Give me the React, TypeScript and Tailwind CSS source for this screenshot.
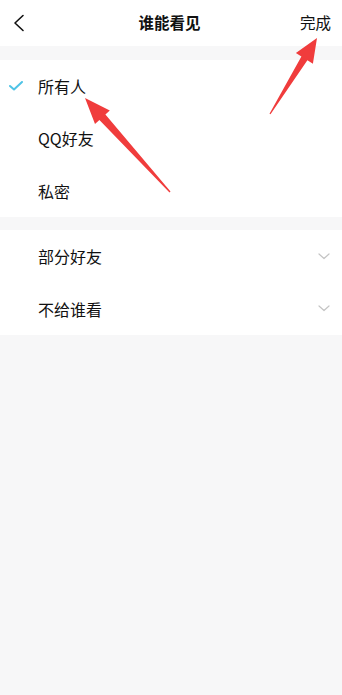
import { useState } from "react";

const font = "font-['Noto_Sans_CJK_SC','Noto_Sans',sans-serif]";

function Check() {
  return (
    <svg width="14" height="10" viewBox="0 0 14 10" fill="none">
      <path d="M1 5 L5 8.5 L13 1" stroke="#4fc3e6" strokeWidth="2" strokeLinecap="round" strokeLinejoin="round" />
    </svg>
  );
}

function ChevronDown() {
  return (
    <svg width="12" height="7" viewBox="0 0 12 7" fill="none">
      <path d="M1 1 L6 5.5 L11 1" stroke="#c4c4c4" strokeWidth="1.2" strokeLinecap="round" strokeLinejoin="round" />
    </svg>
  );
}

export default function App() {
  const [who, setWho] = useState("所有人");
  const options = ["所有人", "QQ好友", "私密"];

  return (
    <div className={`relative w-[342px] h-[695px] bg-[#f7f7f8] text-[#111] ${font}`}>
      {/* header */}
      <div className="h-[46px] bg-white flex items-center justify-between px-[12px]">
        <svg width="12" height="18" viewBox="0 0 12 18" fill="none" className="ml-[1px]">
          <path d="M10 1.5 L2 9 L10 16.5" stroke="#111" strokeWidth="1.6" strokeLinecap="round" strokeLinejoin="round" />
        </svg>
        <div className="text-[15.5px] font-bold leading-none pl-[14px]">谁能看见</div>
        <div className="text-[15.5px] leading-none -mr-[1px]">完成</div>
      </div>

      {/* visibility options */}
      <div className="mt-[14px] bg-white">
        {options.map(o => (
          <div key={o} onClick={() => setWho(o)} className="h-[52.3px] flex items-center">
            <div className="w-[38px] flex justify-center pr-[6px]">{who === o && <Check />}</div>
            <span className="text-[16px] leading-none">{o}</span>
          </div>
        ))}
      </div>

      {/* partial lists */}
      <div className="mt-[13px] bg-white">
        {["部分好友", "不给谁看"].map(o => (
          <div key={o} className="h-[52.5px] flex items-center justify-between pl-[38px] pr-[12px]">
            <span className="text-[16px] leading-none">{o}</span>
            <ChevronDown />
          </div>
        ))}
      </div>

      {/* annotation arrows */}
      <svg className="absolute inset-0 pointer-events-none" width="342" height="695" viewBox="0 0 342 695">
        <polygon
          fill="#f03c3c"
          points="85,98 109.8,110.6 105.4,114.6 170.5,191.5 169.5,192.5 99.4,120 95,124"
        />
        <polygon
          fill="#f03c3c"
          points="317,38 312.9,63.7 307.4,60.2 270.5,114.3 269.5,113.7 301.4,56.6 295.9,53.1"
        />
      </svg>
    </div>
  );
}
